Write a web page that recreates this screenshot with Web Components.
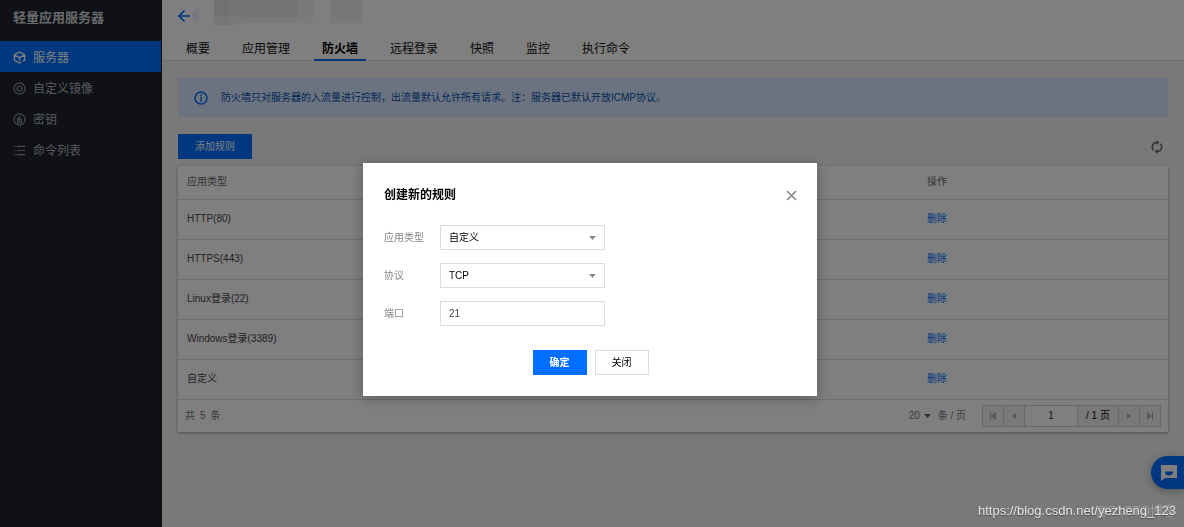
<!DOCTYPE html>
<html lang="zh-CN">
<head>
<meta charset="utf-8">
<title>轻量应用服务器</title>
<style>
  body { margin: 0; font: 10px/16px "Liberation Sans", "Noto Sans CJK SC", sans-serif; color: #333; background: #f2f2f2; }
</style>
</head>
<body>
<app-shell>
  <side-nav slot="nav" heading="轻量应用服务器">
    <side-item icon="cube" active>服务器</side-item>
    <side-item icon="disc">自定义镜像</side-item>
    <side-item icon="key">密钥</side-item>
    <side-item icon="list">命令列表</side-item>
  </side-nav>
  <page-header slot="header">
    <tab-item>概要</tab-item>
    <tab-item>应用管理</tab-item>
    <tab-item active>防火墙</tab-item>
    <tab-item>远程登录</tab-item>
    <tab-item>快照</tab-item>
    <tab-item>监控</tab-item>
    <tab-item>执行命令</tab-item>
  </page-header>
  <info-alert>防火墙只对服务器的入流量进行控制，出流量默认允许所有请求。注：服务器已默认开放ICMP协议。</info-alert>
  <rule-toolbar>添加规则</rule-toolbar>
  <rule-table></rule-table>
</app-shell>
<chat-button></chat-button>
<modal-dialog heading="创建新的规则">
  <field-select label="应用类型" value="自定义"></field-select>
  <field-select label="协议" value="TCP"></field-select>
  <field-text label="端口" value="21"></field-text>
  <ui-button slot="actions" primary>确定</ui-button>
  <ui-button slot="actions">关闭</ui-button>
</modal-dialog>
<page-mark></page-mark>

<script>
const define = (name, render) => customElements.define(name, class extends HTMLElement {
  constructor() {
    super();
    this.attachShadow({ mode: 'open' });
  }
  connectedCallback() {
    this.shadowRoot.innerHTML = '<style>*{box-sizing:border-box}:host{box-sizing:border-box}</style>' + render(this);
  }
});

define('app-shell', () => `
<style>
  :host { display: grid; grid-template-columns: 162px 1fr; min-height: 100vh; }
  .page { min-width: 0; }
  main { display: flow-root; padding: 17px 16px; }
</style>
<slot name="nav"></slot>
<div class="page"><slot name="header"></slot><main><slot></slot></main></div>`);

define('side-nav', el => `
<style>
  :host { display: block; background: #1e222d; color: #b0b3b9; border-right: 1px solid #15171d; }
  h1 { margin: 0; padding: 0 13px; height: 41px; font-size: 13px; line-height: 36px; font-weight: 700; color: #cfd1d5; }
  nav { display: flex; flex-direction: column; }
</style>
<h1>${el.getAttribute('heading')}</h1>
<nav><slot></slot></nav>`);

const navIcons = {
  cube: '<path d="M9 12 7 13 1.500 10V4L7 1l5.500 3v6L10.500 11 M1.500 4.200 7 7.200l5.500-3 M7 7.200v3.300" stroke-width="1.500"/>',
  disc: '<circle cx="7" cy="7" r="6"/><circle cx="7" cy="7" r="2.700"/>',
  key: '<circle cx="7" cy="7" r="6"/><path d="M5.600 6.500V5a1.500 1.500 0 0 1 2.800 0 M5 6.700h4v3.600H5z M7 7.700v1.400"/>',
  list: '<path d="M4 2.500h9 M4 7h9 M4 11.500h9 M1 2.500h1.500 M1 7h1.500 M1 11.500h1.500"/>'
};
define('side-item', el => `
<style>
  :host { display: block; }
  a { display: flex; align-items: center; gap: 7px; height: 31px; padding: 2px 13px 0; font-size: 12px; line-height: 16px; color: inherit; text-decoration: none; }
  :host([active]) a { background: #006eff; color: #fff; }
  svg { width: 13px; height: 13px; fill: none; stroke: #8f959f; stroke-width: 1.3; }
  :host([active]) svg { stroke: #fff; }
</style>
<a href="#"><svg viewBox="0 0 14 14" aria-hidden="true">${navIcons[el.getAttribute('icon')]}</svg><slot></slot></a>`);

define('page-header', () => `
<style>
  :host { display: block; background: #fff; border-bottom: 1px solid #dcdcdc; padding: 0 16px; }
  .top { display: flex; align-items: flex-start; height: 36px; }
  .back { display: block; height: 14px; margin-top: 9px; margin-right: 16px; }
  .back svg { width: 20px; height: 14px; }
  .mosaic { width: 148px; height: 26px; }
  nav { display: flex; gap: 16px; }
</style>
<div class="top">
  <a class="back" href="#" aria-label="返回"><svg viewBox="0 0 20 14"><path d="M20 0a10 8 0 0 0-6 7 10 8 0 0 0 6 6z" fill="#e8efff"/><path d="M12 7H1.500M6.500 1.500 1 7l5.500 5.500" fill="none" stroke="#006eff" stroke-width="1.600"/></svg></a>
  <svg class="mosaic" viewBox="0 0 148 26" aria-hidden="true">
    <path d="M0 0h99v23H37L17 25 0 26z" fill="#f2f2f2"/>
    <path d="M0 0h16v17H0z" fill="#e5e5e3"/><path d="M16 0h67v17H16z" fill="#ebebeb"/>
    <path d="M0 17h16v8l-16 1z" fill="#ececea"/><path d="M83 0h16v23H83z" fill="#f3f6f6"/>
    <path d="M116 0h33v18h-33z" fill="#efefef"/><path d="M116 18h33v6h-33z" fill="#f5f5f5"/>
  </svg>
</div>
<nav><slot></slot></nav>`);

define('tab-item', () => `
<style>
  :host { display: block; }
  a { display: block; height: 24px; padding: 0 8px; font-size: 12px; line-height: 26px; color: #111; text-decoration: none; white-space: nowrap; }
  :host([active]) a { font-weight: 700; color: #000; box-shadow: inset 0 -1px #006eff, 0 1px #006eff; }
</style>
<a href="#"><slot></slot></a>`);

define('info-alert', () => `
<style>
  :host { display: flex; align-items: center; gap: 13px; min-height: 39px; padding: 0 16px; background: #d5e7ff; color: #0a4cae; }
  svg { width: 14px; height: 14px; flex: none; }
</style>
<svg viewBox="0 0 14 14" fill="none" stroke="#006eff" stroke-width="1.500" aria-hidden="true"><circle cx="7" cy="7" r="6"/><path d="M7 3.300v1.500M7 5.800v5"/></svg>
<span><slot></slot></span>`);

define('rule-toolbar', () => `
<style>
  :host { display: flex; justify-content: space-between; align-items: center; margin: 17px 0 7px; }
  button { font: inherit; border: 0; padding: 0; cursor: pointer; }
  .add { height: 25px; padding: 0 17px; background: #006eff; color: #fff; }
  .refresh { display: block; height: 14px; margin-right: 4px; background: none; }
  svg { display: block; width: 14px; height: 14px; }
</style>
<button class="add" type="button"><slot></slot></button>
<button class="refresh" type="button" aria-label="刷新"><svg viewBox="0 0 14 14" fill="none" stroke="#666" stroke-width="1.500"><path d="M3.700 10.300A4.500 4.500 0 0 1 6.800 2.500 M10.300 3.700A4.500 4.500 0 0 1 7.200 11.500"/><path d="M6.400 0 9.400 2.500 6.400 5z M7.600 9 4.600 11.500 7.600 14z" fill="#666" stroke="none"/></svg></button>`);

define('rule-table', () => `
<style>
  :host { display: block; background: #fff; box-shadow: 0 1px 3px rgba(0,0,0,.35); }
  table { width: 100%; border-collapse: collapse; table-layout: fixed; }
  th, td { padding: 0 9px; text-align: left; font-weight: 400; border-bottom: 1px solid #dcdcdc; }
  th { height: 33px; color: #666; }
  td { height: 40px; color: #444; }
  .ops { width: 250px; }
  a { color: #006eff; text-decoration: none; }
</style>
<table>
  <thead><tr><th>应用类型</th><th class="ops">操作</th></tr></thead>
  <tbody>${['HTTP(80)', 'HTTPS(443)', 'Linux登录(22)', 'Windows登录(3389)', '自定义']
    .map(name => `<tr><td>${name}</td><td><a href="#">删除</a></td></tr>`).join('')}</tbody>
</table>
<table-pager></table-pager>`);

define('table-pager', () => `
<style>
  :host { display: flex; align-items: center; height: 32px; padding: 0 7px; color: #777; }
  .total { display: flex; gap: 5px; margin-right: auto; }
  .size { display: flex; gap: 7px; margin-right: 16px; }
  .pick { display: grid; align-items: center; width: 22px; }
  .pick > * { grid-area: 1 / 1; }
  select { appearance: none; width: 22px; height: 16px; margin: 0; padding: 0; border: 0; background: none; color: inherit; font: inherit; }
  .pick svg { justify-self: end; width: 7px; height: 4px; pointer-events: none; }
  .pages { display: flex; height: 22px; border: 1px solid #d0d0d0; background: #f2f2f2; }
  button { display: grid; place-items: center; width: 21px; padding: 0; border: 0; border-right: 1px solid #d0d0d0; background: none; }
  button:last-child { width: 20px; border: 0; }
  button svg { width: 8px; height: 8px; fill: #aaa; }
  input { width: 53px; margin: 0; padding: 0; border: 0; border-right: 1px solid #d0d0d0; border-radius: 0; background: #fff; text-align: center; font: inherit; color: #333; }
  .of { width: 41px; line-height: 20px; text-align: center; color: #000; border-right: 1px solid #d0d0d0; }
</style>
<div class="total"><span>共</span><span>5</span><span>条</span></div>
<div class="size">
  <span class="pick"><select aria-label="每页条数"><option>20</option></select><svg viewBox="0 0 7 4"><path d="M0 0h7L3.500 4z" fill="#666"/></svg></span>
  <span>条 / 页</span>
</div>
<div class="pages">
  <button type="button" aria-label="首页"><svg viewBox="0 0 8 8"><path d="M1 0h1v8H1z M7 0v8L2 4z"/></svg></button>
  <button type="button" aria-label="上一页"><svg viewBox="0 0 8 8"><path d="M6 1v6L2 4z"/></svg></button>
  <input type="text" value="1" aria-label="页码">
  <span class="of">/ 1 页</span>
  <button type="button" aria-label="下一页"><svg viewBox="0 0 8 8"><path d="M2 1v6l4-3z"/></svg></button>
  <button type="button" aria-label="末页"><svg viewBox="0 0 8 8"><path d="M6 0h1v8H6z M1 0v8l5-4z"/></svg></button>
</div>`);

define('chat-button', () => `
<style>
  :host { display: block; position: fixed; right: 0; bottom: 38px; }
  button { display: grid; place-items: center; width: 33px; height: 33px; padding: 0 0 0 3px; border: 0; border-radius: 17px 0 0 17px; background: #006eff; box-shadow: 0 2px 8px rgba(0,0,0,.3); }
  svg { display: block; width: 18px; height: 16px; }
</style>
<button type="button" aria-label="在线咨询"><svg viewBox="0 0 18 16"><path d="M1 0h16v13H5l-4 3z" fill="#fff"/><path d="M5 6.500h8a4 4 0 0 1-8 0z" fill="#006eff"/></svg></button>`);

define('modal-dialog', el => `
<style>
  :host { position: fixed; inset: 0; display: flex; align-items: center; justify-content: center; padding: 32px 4px 0 0; background: rgba(0,0,0,.5); }
  section { width: 454px; max-width: 100%; padding: 20px 20px 21px 21px; background: #fff; box-shadow: 0 2px 12px rgba(0,0,0,.3); }
  header { display: flex; align-items: center; justify-content: space-between; }
  h2 { margin: 0; font-size: 12px; line-height: 24px; color: #000; }
  header button { padding: 0; border: 0; background: none; }
  svg { display: block; width: 11px; height: 11px; }
  .body { display: grid; gap: 13px; margin: 18px 0 24px; }
  footer { display: flex; justify-content: center; gap: 8px; }
</style>
<section role="dialog" aria-labelledby="t">
  <header><h2 id="t">${el.getAttribute('heading')}</h2>
    <button type="button" aria-label="关闭"><svg viewBox="0 0 11 11"><path d="M1 1l9 9M10 1l-9 9" stroke="#888" stroke-width="1.700"/></svg></button></header>
  <div class="body"><slot></slot></div>
  <footer><slot name="actions"></slot></footer>
</section>`);

const fieldStyle = `
<style>
  :host { display: grid; grid-template-columns: 56px 165px; align-items: center; }
  label { color: #888; }
  .box { display: grid; align-items: center; }
  .box > * { grid-area: 1 / 1; }
  select, input { appearance: none; width: 100%; height: 25px; margin: 0; padding: 0 8px; border: 1px solid #ddd; border-radius: 0; background: #fff; font: inherit; color: #000; }
  input { color: #444; }
  svg { justify-self: end; width: 7px; height: 4px; margin-right: 9px; pointer-events: none; }
</style>`;
define('field-select', el => `${fieldStyle}
<label for="c">${el.getAttribute('label')}</label>
<div class="box"><select id="c"><option>${el.getAttribute('value')}</option></select><svg viewBox="0 0 7 4"><path d="M0 0h7L3.500 4z" fill="#888"/></svg></div>`);
define('field-text', el => `${fieldStyle}
<label for="c">${el.getAttribute('label')}</label>
<div class="box"><input id="c" type="text" value="${el.getAttribute('value')}"></div>`);

define('ui-button', () => `
<style>
  :host { display: block; }
  button { height: 25px; padding: 0 16px; border: 1px solid #ddd; background: #fff; color: #000; font: inherit; }
  :host([primary]) button { border-color: #006eff; background: #006eff; color: #fff; font-weight: 700; }
</style>
<button type="button"><slot></slot></button>`);

define('page-mark', () => `
<style>
  :host { position: fixed; right: 8px; bottom: 8px; display: grid; justify-items: end; font-size: 13px; line-height: 16px; white-space: nowrap; pointer-events: none; }
  span { grid-area: 1 / 1; }
  .site { color: rgba(255,255,255,.25); }
  .url { color: #e4e4e4; text-shadow: 0 1px 1px rgba(0,0,0,.4); }
</style>
<span class="site">@51CTO博客</span>
<span class="url">https://blog.csdn.net/yezheng_123</span>`);
</script>
</body>
</html>
